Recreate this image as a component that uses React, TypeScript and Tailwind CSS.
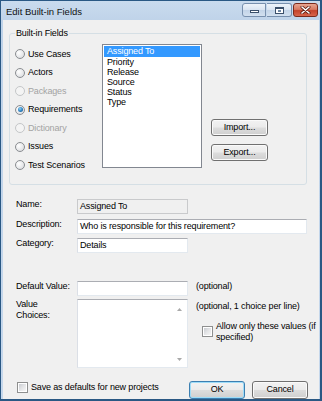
import React from "react";

function Radio({ checked, disabled }: { checked?: boolean; disabled?: boolean }) {
  return (
    <div
      className={
        "w-[10px] h-[10px] rounded-full border flex items-center justify-center shrink-0 " +
        (disabled
          ? "border-[#c4c6c8] bg-[#f4f4f4]"
          : "border-[#8a8d91] bg-[radial-gradient(circle_at_35%_35%,#ffffff_0%,#e6e7e9_60%,#cfd2d6_100%)]")
      }
    >
      {checked && (
        <div className="w-[5px] h-[5px] rounded-full bg-[radial-gradient(circle_at_40%_35%,#8fd3f6_0%,#2a7fc0_55%,#1b4f7f_100%)]" />
      )}
    </div>
  );
}

function Check() {
  return (
    <div className="w-[11px] h-[11px] border border-[#8e8f8f] bg-white p-[1px] shrink-0">
      <div className="w-full h-full bg-[linear-gradient(135deg,#c9ccd1_0%,#e4e5e7_50%,#f6f6f6_100%)]" />
    </div>
  );
}

function Btn({ label, def, size }: { label: string; def?: boolean; size: string }) {
  return (
    <div
      className={
        size +
        " flex items-center justify-center rounded-[3px] border bg-[linear-gradient(to_bottom,#f2f2f2_0%,#ebebeb_48%,#dddddd_52%,#cfcfcf_100%)] " +
        (def
          ? "border-[#3c7fb1] shadow-[inset_0_0_0_1px_#9edcf8]"
          : "border-[#707070] shadow-[inset_0_0_0_1px_#fafafa]")
      }
    >
      {label}
    </div>
  );
}

const fieldCls =
  "h-[15px] bg-white border border-t-[#abadb3] border-l-[#dbdfe6] border-r-[#e3e9ef] border-b-[#e3e9ef] pl-[2px] flex items-center overflow-hidden whitespace-nowrap";

export default function App() {
  const radios: { label: string; checked?: boolean; disabled?: boolean }[] = [
    { label: "Use Cases" },
    { label: "Actors" },
    { label: "Packages", disabled: true },
    { label: "Requirements", checked: true },
    { label: "Dictionary", disabled: true },
    { label: "Issues" },
    { label: "Test Scenarios" },
  ];
  const items = ["Assigned To", "Priority", "Release", "Source", "Status", "Type"];

  return (
    <div className="w-[322px] h-[401px] bg-[#2a5884] pl-px pt-px pr-[2px] pb-[2px] font-['Liberation_Sans',Arial,sans-serif] text-[9px] leading-[11px] text-black tracking-[-0.15px]">
      <div className="h-full flex flex-col bg-[linear-gradient(to_bottom,#c9dbee_0%,#bfd3e9_20px,#c6d8ec_100%)]">
        {/* title bar */}
        <div className="h-[19px] flex items-start shrink-0">
          <div className="pl-[5px] pt-[5px] text-[9.5px] leading-[11px] text-[#111] tracking-normal">
            Edit Built-in Fields
          </div>
          <div className="ml-auto mr-[2px] mt-[2px] flex gap-[1px]">
            <div className="w-[24px] h-[14px] rounded-l-[3px] border border-[#7890ae] bg-[linear-gradient(to_bottom,#eef4fa_0%,#d9e4f1_50%,#c3d4e8_52%,#d2e0ef_100%)] flex items-end justify-center pb-[3px]">
              <div className="w-[9px] h-[3px] bg-white border border-[#3a4f6a]" />
            </div>
            <div className="w-[25px] h-[14px] rounded-r-[3px] border border-l-0 border-[#7890ae] bg-[linear-gradient(to_bottom,#eef4fa_0%,#d9e4f1_50%,#c3d4e8_52%,#d2e0ef_100%)] flex items-center justify-center">
              <div className="w-[9px] h-[7px] bg-white border border-[#3a4f6a] border-t-2 flex items-center justify-center">
                <div className="w-[3px] h-[2px] bg-[#6e87a6]" />
              </div>
            </div>
            <div className="w-[25px] h-[14px] rounded-[3px] border border-[#7a2a1c] bg-[linear-gradient(to_bottom,#e8a591_0%,#d77a63_45%,#c4432b_55%,#d8654b_100%)] flex items-center justify-center">
              <svg width="11" height="8" viewBox="0 0 11 8">
                <path d="M2 1 L9 7 M9 1 L2 7" stroke="#5b1c12" strokeWidth="3" strokeLinecap="round" />
                <path d="M2 1 L9 7 M9 1 L2 7" stroke="#ffffff" strokeWidth="1.6" strokeLinecap="round" />
              </svg>
            </div>
          </div>
        </div>

        {/* client */}
        <div className="flex-1 bg-[#f0f0f0] ml-[2px] mr-[1px] mb-[1px] flex flex-col">
          {/* group box */}
          <fieldset className="ml-[6px] mt-[8px] w-[298px] border border-[#d5dfe5] rounded-[3px] pt-[5px] pb-[9px] px-0 m-0">
            <legend className="ml-[5px] px-[1px] leading-[11px]">Built-in Fields</legend>
            <div className="flex">
              <div className="w-[92px] pl-[5px] pt-px flex flex-col">
                {radios.map((r) => (
                  <div key={r.label} className="h-[18.5px] flex items-center gap-[3px]">
                    <Radio checked={r.checked} disabled={r.disabled} />
                    <span className={r.disabled ? "text-[#a3a3a3]" : ""}>{r.label}</span>
                  </div>
                ))}
              </div>
              <div className="w-[100px] h-[124px] border border-[#828790] bg-white p-px flex flex-col">
                {items.map((it, i) => (
                  <div
                    key={it}
                    className={
                      "pl-[3px] whitespace-nowrap " +
                      (i === 0 ? "bg-[#3399ff] text-white h-[11px] leading-[11px]" : "h-[10px] leading-[10px]")
                    }
                  >
                    {it}
                  </div>
                ))}
              </div>
              <div className="ml-[9px] pt-[75px] flex flex-col gap-[8px]">
                <Btn label="Import..." size="w-[57px] h-[17px]" />
                <Btn label="Export..." size="w-[57px] h-[17px]" />
              </div>
            </div>
          </fieldset>

          {/* Name */}
          <div className="mt-[14px] pl-[13px] flex items-start">
            <div className="w-[61px]">Name:</div>
            <div className="w-[111px] h-[15px] bg-[#f0f0f0] border border-[#c9cacc] pl-[2px] flex items-center">
              Assigned To
            </div>
          </div>
          {/* Description */}
          <div className="mt-[5px] pl-[13px] flex items-start">
            <div className="w-[61px]">Description:</div>
            <div className={fieldCls + " w-[230px]"}>Who is responsible for this requirement?</div>
          </div>
          {/* Category */}
          <div className="mt-[4px] pl-[13px] flex items-start">
            <div className="w-[61px]">Category:</div>
            <div className={fieldCls + " w-[111px]"}>Details</div>
          </div>
          {/* Default Value */}
          <div className="mt-[28px] pl-[13px] flex items-start">
            <div className="w-[61px]">Default Value:</div>
            <div className={fieldCls + " w-[111px]"} />
            <div className="ml-[8px]">(optional)</div>
          </div>
          {/* Value choices */}
          <div className="mt-[3px] pl-[13px] flex items-start">
            <div className="w-[61px]">
              Value
              <br />
              Choices:
            </div>
            <div className="w-[111px] h-[69px] bg-white border border-t-[#abadb3] border-l-[#dbdfe6] border-r-[#e3e9ef] border-b-[#e3e9ef] flex justify-end">
              <div className="w-[16px] h-full flex flex-col items-center justify-between pt-[8px] pb-[6px]">
                <svg width="5" height="3" viewBox="0 0 5 3">
                  <path d="M0 3 L2.5 0 L5 3 Z" fill="#a9a9a9" />
                </svg>
                <svg width="5" height="3" viewBox="0 0 5 3">
                  <path d="M0 0 L5 0 L2.5 3 Z" fill="#a9a9a9" />
                </svg>
              </div>
            </div>
            <div className="ml-[8px] flex flex-col">
              <div className="mt-[2px]">(optional, 1 choice per line)</div>
              <div className="mt-[9px] ml-[6px] flex items-center gap-[3px]">
                <Check />
                <div>
                  Allow only these values (if
                  <br />
                  specified)
                </div>
              </div>
            </div>
          </div>
          {/* bottom row */}
          <div className="mt-[13px] pl-[14px] pr-[11px] flex items-start">
            <div className="mt-px flex items-center gap-[3px]">
              <Check />
              <span>Save as defaults for new projects</span>
            </div>
            <div className="ml-auto flex gap-[7px]">
              <Btn label="OK" def size="w-[56px] h-[18px]" />
              <Btn label="Cancel" size="w-[56px] h-[18px]" />
            </div>
          </div>
        </div>
      </div>
    </div>
  );
}
